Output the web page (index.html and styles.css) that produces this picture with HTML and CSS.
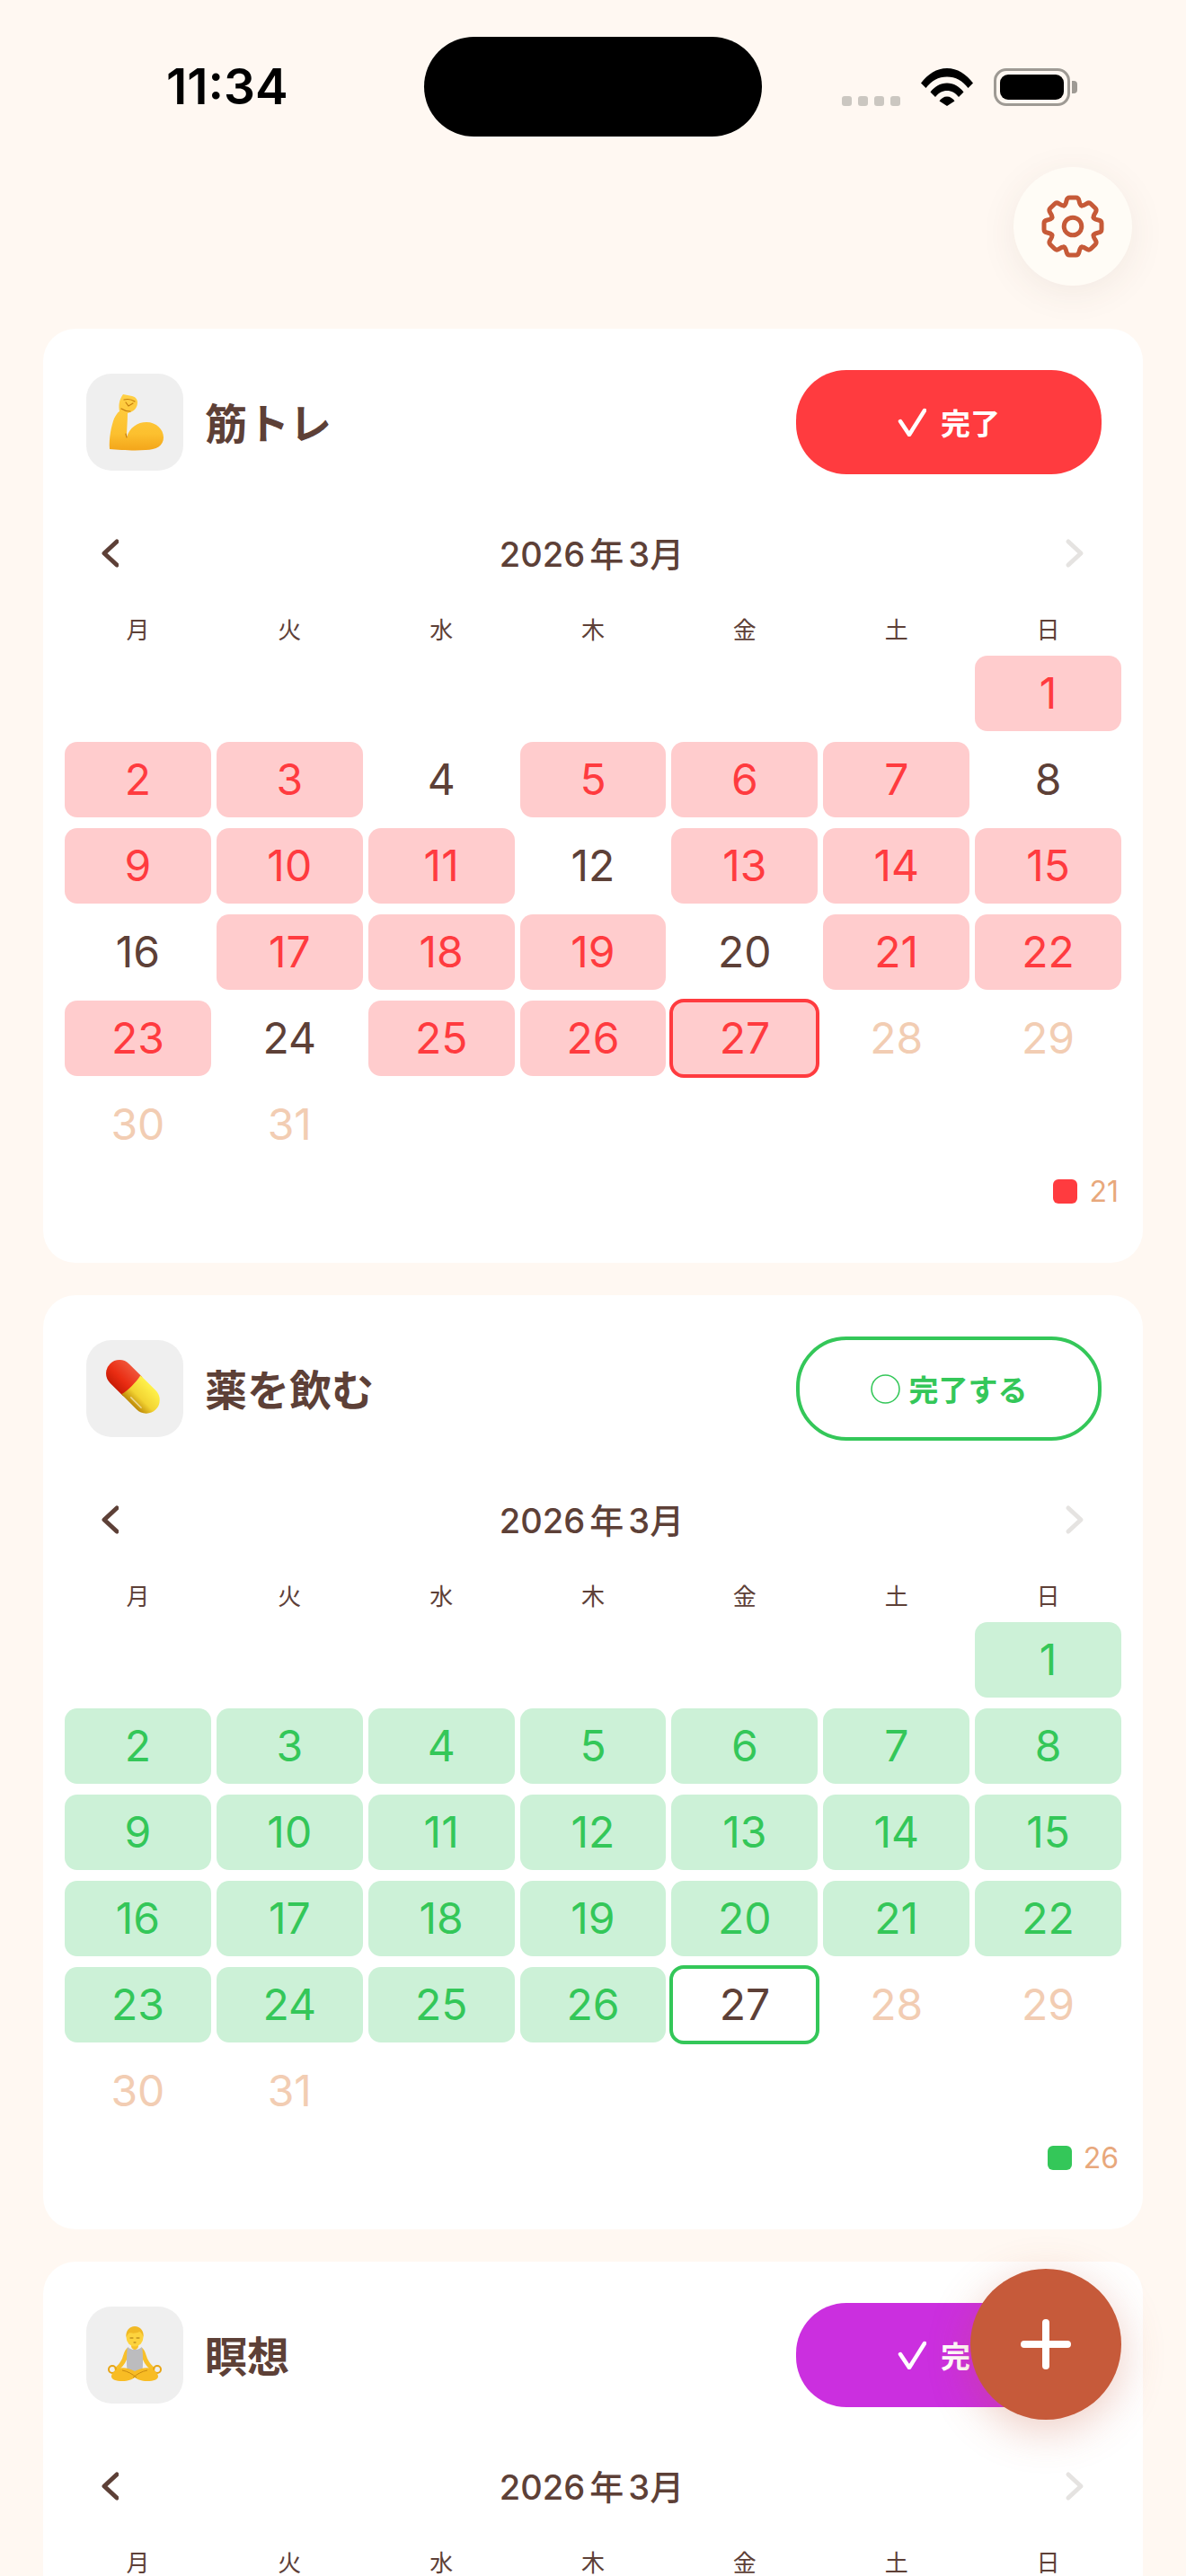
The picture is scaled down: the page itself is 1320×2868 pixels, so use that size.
FILE: index.html
```html
<!DOCTYPE html>
<html lang="ja">
<head>
    <meta charset="UTF-8">
    <meta name="viewport" content="width=device-width, initial-scale=1.0">
    <title>習慣トラッカー</title>
    <link rel="stylesheet" href="styles.css">
</head>
<body>
<div class="screen">
    <div class="status-bar">
        <div class="clock">11:34</div>
        <div class="island"></div>
        <div class="status-icons">
            <div class="signal"><i></i><i></i><i></i><i></i></div>
            <svg class="wifi" viewBox="0 0 58 42"><path d="M0 16.500C7.500 6.500 17.500 0 29 0s21.500 6.500 29 16.500l-5.500 5.500C46.500 14 38.500 9.500 29 9.500S11.500 14 5.500 22Z"/><path d="M10.500 26.500C15 20.500 21.500 16.500 29 16.500s14 4 18.500 10l-5.500 5.500C38.500 27.500 34 25 29 25s-9.500 2.500-13 7Z"/><path d="M20.500 36.500C22.500 33.500 25.500 31.500 29 31.500s6.500 2 8.500 5L29 42Z"/></svg>
            <div class="battery"><div class="battery-fill"></div></div>
        </div>
    </div>

    <button class="settings-btn">
        <svg viewBox="0 0 70 70" fill="none" stroke="#c65a38" stroke-width="5" stroke-linecap="round" stroke-linejoin="round">
            <g transform="translate(35 35)">
                <path id="tooth" d="M-9.600-23.200C-8-24-7.500-26-7-28.500-6.500-31-5.500-32-3.500-32H3.500C5.500-32 6.500-31 7-28.500 7.500-26 8-24 9.600-23.200"/>
                <use href="#tooth" transform="rotate(45)"/>
                <use href="#tooth" transform="rotate(90)"/>
                <use href="#tooth" transform="rotate(135)"/>
                <use href="#tooth" transform="rotate(180)"/>
                <use href="#tooth" transform="rotate(225)"/>
                <use href="#tooth" transform="rotate(270)"/>
                <use href="#tooth" transform="rotate(315)"/>
                <circle r="9.800"/>
            </g>
        </svg>
    </button>

    <div class="card-list">
        <!-- 筋トレ -->
        <section class="card red">
            <div class="card-header">
                <div class="habit-icon">
                    <svg viewBox="0 0 64 64">
                        <defs><linearGradient id="arm" x1="0" y1="0" x2="0" y2="1"><stop offset="0" stop-color="#ffd045"/><stop offset=".7" stop-color="#fcc02f"/><stop offset="1" stop-color="#f3a51a"/></linearGradient></defs>
                        <path fill="url(#arm)" d="M19 1 29 3C33 4 35 7 35 10 35 14 33 19 27 21L24 22C24 30 23 40 23 49 26 38 35 32 45 32 56 32 64 40 64 49 64 58 56 63 44 63 32 64 15 63 4 62 3 50 6 36 9 28 11 24 13 21 15 20 14 14 14 8 19 1Z"/>
                        <path fill="none" stroke="#c47c0e" stroke-width="1.200" stroke-linecap="round" d="M20 7C24 6 29 7 32 9M22 10 25 14 30 11M17 17C20 19 24 20 27 20M23 49 22 45"/>
                    </svg>
                </div>
                <h2 class="habit-name">筋トレ</h2>
                <button class="done-btn">
                    <svg class="check" viewBox="0 0 32 32"><path d="M3 15l10 15L30 3"/></svg>
                    <span>完了</span>
                </button>
            </div>
            <div class="month-nav">
                <svg class="chevron" viewBox="0 0 22 34"><path d="M20 4 6 17l14 13"/></svg>
                <div class="month-label">2026 年 3月</div>
                <svg class="chevron off" viewBox="0 0 22 34"><path d="M4 4l14 13L4 30"/></svg>
            </div>
            <div class="weekdays"><span>月</span><span>火</span><span>水</span><span>木</span><span>金</span><span>土</span><span>日</span></div>
            <div class="days">
                <span class="sun-first on">1</span>
                <span class="on">2</span><span class="on">3</span><span>4</span><span class="on">5</span><span class="on">6</span><span class="on">7</span><span>8</span>
                <span class="on">9</span><span class="on">10</span><span class="on">11</span><span>12</span><span class="on">13</span><span class="on">14</span><span class="on">15</span>
                <span>16</span><span class="on">17</span><span class="on">18</span><span class="on">19</span><span>20</span><span class="on">21</span><span class="on">22</span>
                <span class="on">23</span><span>24</span><span class="on">25</span><span class="on">26</span><span class="on today">27</span><span class="future">28</span><span class="future">29</span>
                <span class="future">30</span><span class="future">31</span>
            </div>
            <div class="legend"><i></i><span>21</span></div>
        </section>

        <!-- 薬を飲む -->
        <section class="card green">
            <div class="card-header">
                <div class="habit-icon">
                    <svg viewBox="0 0 64 64">
                        <defs>
                            <linearGradient id="pillRed" x1="0" y1="0" x2="0" y2="1"><stop offset="0" stop-color="#f0553a"/><stop offset=".6" stop-color="#e92c12"/><stop offset="1" stop-color="#c81c06"/></linearGradient>
                            <linearGradient id="pillYellow" x1="0" y1="0" x2="0" y2="1"><stop offset="0" stop-color="#fff14a"/><stop offset=".6" stop-color="#f2d332"/><stop offset="1" stop-color="#bd8806"/></linearGradient>
                        </defs>
                        <g transform="rotate(45 32 32)">
                            <path fill="url(#pillRed)" d="M32 17H11a15 15 0 0 0 0 30h21Z" transform="translate(-3 0)"/>
                            <path fill="url(#pillYellow)" d="M29 17h24a15 15 0 0 1 0 30H29c2-9 2-21 0-30Z" transform="translate(-3 0)"/>
                            <path fill="none" stroke="#fff" stroke-opacity=".55" stroke-width="1.500" stroke-linecap="round" d="M36 42h16"/>
                        </g>
                    </svg>
                </div>
                <h2 class="habit-name">薬を飲む</h2>
                <button class="done-btn todo">
                    <svg class="ring" viewBox="0 0 32 32"><circle cx="16" cy="16" r="15"/></svg>
                    <span>完了する</span>
                </button>
            </div>
            <div class="month-nav">
                <svg class="chevron" viewBox="0 0 22 34"><path d="M20 4 6 17l14 13"/></svg>
                <div class="month-label">2026 年 3月</div>
                <svg class="chevron off" viewBox="0 0 22 34"><path d="M4 4l14 13L4 30"/></svg>
            </div>
            <div class="weekdays"><span>月</span><span>火</span><span>水</span><span>木</span><span>金</span><span>土</span><span>日</span></div>
            <div class="days">
                <span class="sun-first on">1</span>
                <span class="on">2</span><span class="on">3</span><span class="on">4</span><span class="on">5</span><span class="on">6</span><span class="on">7</span><span class="on">8</span>
                <span class="on">9</span><span class="on">10</span><span class="on">11</span><span class="on">12</span><span class="on">13</span><span class="on">14</span><span class="on">15</span>
                <span class="on">16</span><span class="on">17</span><span class="on">18</span><span class="on">19</span><span class="on">20</span><span class="on">21</span><span class="on">22</span>
                <span class="on">23</span><span class="on">24</span><span class="on">25</span><span class="on">26</span><span class="today">27</span><span class="future">28</span><span class="future">29</span>
                <span class="future">30</span><span class="future">31</span>
            </div>
            <div class="legend"><i></i><span>26</span></div>
        </section>

        <!-- 瞑想 -->
        <section class="card purple">
            <div class="card-header">
                <div class="habit-icon">
                    <svg viewBox="0 0 64 64">
                        <path fill="#f8c02a" d="M24 24c-3 2-4 6-6 12-2 4-5 8-9 11l3 3c5-3 9-8 11-13l3-6ZM40 24c3 2 4 6 6 12 2 4 5 8 9 11l-3 3c-5-3-9-8-11-13l-3-6Z"/>
                        <circle cx="7" cy="48" r="4" fill="none" stroke="#e7a514" stroke-width="2"/>
                        <circle cx="57" cy="48" r="4" fill="none" stroke="#e7a514" stroke-width="2"/>
                        <path fill="#bcbcbe" d="M24 23c2 1 3 3 8 3s6-2 8-3c1 6 1 10 1 15 0 5 0 9-1 12H24c-1-3-1-7-1-12 0-5 0-9 1-15Z"/>
                        <path fill="#f8c02a" d="M28 18h8v4c0 2-2 4-4 4s-4-2-4-4Z"/>
                        <ellipse cx="32" cy="12" rx="9.500" ry="10.500" fill="#fdd33e"/>
                        <path fill="#f1b925" d="M22.500 12C21.500 5 26 0 32 0s10.500 5 9.500 12c-1-3-2-5-4-6-4 2-9 2-11 1-2 1-3 3-4 5Z"/>
                        <path fill="none" stroke="#a4700e" stroke-width="1" stroke-linecap="round" d="M27 13h3M34 13h3M31 18h2"/>
                        <path fill="#f8bc24" d="M32 50c-6-3-13-5-18-3-5 2-8 6-8 9 0 3 5 5 12 5 7 0 11-2 14-4 3 2 7 4 14 4s12-2 12-5c0-3-3-7-8-9-5-2-12 0-18 3Z"/>
                        <path fill="none" stroke="#c98a10" stroke-width="1" d="M18 49c6 1 11 4 16 8M46 49c-6 1-11 4-16 8"/>
                    </svg>
                </div>
                <h2 class="habit-name">瞑想</h2>
                <button class="done-btn">
                    <svg class="check" viewBox="0 0 32 32"><path d="M3 15l10 15L30 3"/></svg>
                    <span>完了</span>
                </button>
            </div>
            <div class="month-nav">
                <svg class="chevron" viewBox="0 0 22 34"><path d="M20 4 6 17l14 13"/></svg>
                <div class="month-label">2026 年 3月</div>
                <svg class="chevron off" viewBox="0 0 22 34"><path d="M4 4l14 13L4 30"/></svg>
            </div>
            <div class="weekdays"><span>月</span><span>火</span><span>水</span><span>木</span><span>金</span><span>土</span><span>日</span></div>
        </section>
    </div>

    <button class="add-btn">
        <svg viewBox="0 0 56 56"><path d="M28 4v48M4 28h48"/></svg>
    </button>
</div>
</body>
</html>
```

FILE: styles.css
```css
* {
    box-sizing: border-box;
}
body {
    margin: 0;
    background-color: #fff8f2;
    color: #5d4037;
    font-family: Inter, "Noto Sans CJK JP", sans-serif;
}
button {
    font-family: inherit;
    padding: 0;
    border: none;
}
.screen {
    position: relative;
    height: 2868px;
    overflow: hidden;
}

/* status bar */
.status-bar {
    display: grid;
    grid-template-columns: 287px 376px 1fr;
    align-items: center;
    padding: 41px 0 0 185px;
}
.clock {
    color: #000;
    font-size: 55px;
    font-weight: 600;
    line-height: 111px;
}
.island {
    height: 111px;
    background-color: #000;
    border-radius: 56px;
}
.status-icons {
    display: flex;
    align-items: flex-end;
    padding-left: 89px;
}
.signal {
    display: flex;
    gap: 7px;
    margin-right: 23px;
}
.signal i {
    width: 11px;
    height: 11px;
    border-radius: 3px;
    background-color: #cbc7c1;
}
.wifi {
    width: 58px;
    height: 42px;
    margin-right: 23px;
}
.battery {
    position: relative;
    width: 85px;
    height: 42px;
    padding: 4px;
    border: 3px solid #9e9a94;
    border-radius: 14px;
}
.battery::after {
    content: "";
    position: absolute;
    right: -11px;
    top: 11px;
    width: 6px;
    height: 14px;
    background-color: #9e9a94;
    border-radius: 0 4px 4px 0;
}
.battery-fill {
    height: 100%;
    background-color: #000;
    border-radius: 9px;
}

/* floating buttons */
.settings-btn {
    position: absolute;
    top: 186px;
    right: 60px;
    z-index: 2;
    display: flex;
    align-items: center;
    justify-content: center;
    width: 132px;
    height: 132px;
    background-color: #fffcf6;
    border-radius: 50%;
    box-shadow: 0 8px 40px rgba(93,64,55,0.08);
}
.settings-btn svg {
    width: 70px;
    height: 70px;
}
.add-btn {
    position: absolute;
    top: 2526px;
    left: 1080px;
    z-index: 2;
    display: flex;
    align-items: center;
    justify-content: center;
    width: 168px;
    height: 168px;
    background-color: #c65a3a;
    border-radius: 50%;
    box-shadow: 0 12px 48px rgba(198,90,58,0.3);
}
.add-btn svg {
    width: 56px;
    height: 56px;
    fill: none;
    stroke: #fff;
    stroke-width: 8;
    stroke-linecap: round;
}

/* cards */
.card-list {
    margin: 214px 48px 0;
}
.card {
    height: 1040px;
    margin-bottom: 36px;
    padding: 46px 24px;
    background-color: white;
    border-radius: 36px;
}
.red {
    --habit: #ff3b3f;
    --habit-soft: #ffcccd;
}
.green {
    --habit: #34c759;
    --habit-soft: #ccf1d7;
}
.purple {
    --habit: #cb2fdf;
    --habit-soft: #f2cbf7;
}
.card-header {
    display: flex;
    align-items: center;
    margin: 0 22px 0 24px;
}
.habit-icon {
    display: flex;
    align-items: center;
    justify-content: center;
    width: 108px;
    height: 108px;
    background-color: #efefef;
    border-radius: 28px;
}
.habit-icon svg {
    width: 64px;
    height: 64px;
}
.habit-name {
    flex: 1;
    margin: 0 0 4px 24px;
    font-size: 47px;
    font-weight: 700;
}
.done-btn {
    display: flex;
    align-items: center;
    justify-content: center;
    gap: 16px;
    width: 340px;
    height: 116px;
    color: white;
    background-color: var(--habit);
    border-radius: 56px;
    font-size: 33px;
    font-weight: 700;
}
.done-btn.todo {
    gap: 10px;
    color: var(--habit);
    background-color: white;
    border: 4px solid var(--habit);
}
.check {
    width: 32px;
    height: 32px;
    fill: none;
    stroke: white;
    stroke-width: 4.5;
    stroke-linecap: round;
    stroke-linejoin: round;
}
.ring {
    width: 33px;
    height: 33px;
    fill: none;
    stroke: var(--habit);
    stroke-width: 1.5;
}

/* calendar */
.month-nav {
    display: flex;
    align-items: center;
    justify-content: space-between;
    height: 64px;
    margin-top: 56px;
    padding: 0 41px 0 38px;
}
.month-label {
    padding-bottom: 3px;
    font-size: 38px;
    font-weight: 500;
    word-spacing: -5px;
}
.chevron {
    width: 22px;
    height: 34px;
    fill: none;
    stroke: #5d4037;
    stroke-width: 5;
    stroke-linecap: round;
    stroke-linejoin: round;
}
.chevron.off {
    stroke: #e5e3e1;
}
.weekdays, .days {
    display: grid;
    grid-template-columns: repeat(7, 1fr);
    column-gap: 6px;
    text-align: center;
}
.weekdays {
    margin-top: 38px;
    font-size: 26px;
    line-height: 32px;
}
.days {
    grid-auto-rows: 84px;
    row-gap: 12px;
    height: 564px;
    margin-top: 12px;
    font-size: 48px;
    font-weight: 420;
    line-height: 84px;
}
.days span {
    border-radius: 14px;
}
.days .sun-first {
    grid-column: 7;
}
.days .on {
    color: var(--habit);
    background-color: var(--habit-soft);
}
.days .today {
    outline: 4px solid var(--habit);
    outline-offset: -2px;
}
.days .future {
    color: #f2cdb3;
}
.legend {
    display: flex;
    align-items: center;
    justify-content: flex-end;
    gap: 13px;
    height: 27px;
    margin-top: 19px;
    padding-right: 3px;
    color: #e8a87c;
    font-size: 32px;
}
.legend i {
    width: 27px;
    height: 27px;
    background-color: var(--habit);
    border-radius: 6px;
}
```
